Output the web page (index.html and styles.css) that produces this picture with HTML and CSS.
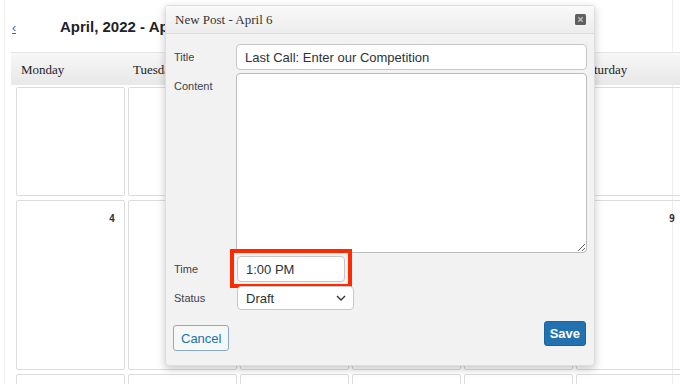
FILE: index.html
```html
<!DOCTYPE html>
<html lang="en">
<head>
    <meta charset="UTF-8">
    <meta name="viewport" content="width=device-width, initial-scale=1.0">
    <title>Editorial Calendar</title>
    <link rel="stylesheet" href="styles.css">
</head>
<body>
    <div class="page">
        <div class="topbar">
            <a href="#" class="prev">&lsaquo;</a>
            <h2 class="range">April, 2022 - April, 2022</h2>
        </div>

        <div class="calendar">
            <div class="day-names">
                <div class="day-name">Monday</div>
                <div class="day-name">Tuesday</div>
                <div class="day-name">Wednesday</div>
                <div class="day-name">Thursday</div>
                <div class="day-name">Friday</div>
                <div class="day-name">Saturday</div>
                <div class="day-name">Sunday</div>
            </div>
            <div class="weeks">
                <div class="day"></div>
                <div class="day"></div>
                <div class="day"></div>
                <div class="day"></div>
                <div class="day"></div>
                <div class="day"></div>
                <div class="day"></div>

                <div class="day"><span class="num">4</span></div>
                <div class="day"><span class="num">5</span></div>
                <div class="day"><span class="num">6</span></div>
                <div class="day"><span class="num">7</span></div>
                <div class="day"><span class="num">8</span></div>
                <div class="day"><span class="num">9</span></div>
                <div class="day"><span class="num">10</span></div>

                <div class="day"></div>
                <div class="day"></div>
                <div class="day"></div>
                <div class="day"></div>
                <div class="day"></div>
                <div class="day"></div>
                <div class="day"></div>
            </div>
        </div>

        <div class="dialog">
            <div class="dialog-head">
                <span class="dialog-title">New Post - April 6</span>
                <span class="close">
                    <svg width="11" height="11" viewBox="0 0 11 11">
                        <rect width="11" height="11" rx="1.5" fill="#5f5f5f"/>
                        <path d="M3.3 3.3 L7.7 7.7 M7.7 3.3 L3.3 7.7" stroke="#bdbdbd" stroke-width="1.4"/>
                    </svg>
                </span>
            </div>
            <div class="dialog-body">
                <label class="label">Title</label>
                <input class="field" type="text" value="Last Call: Enter our Competition">

                <label class="label">Content</label>
                <textarea class="field content"></textarea>

                <label class="label">Time</label>
                <div class="time-wrap"><input class="field time" type="text" value="1:00 PM"></div>

                <label class="label">Status</label>
                <div class="select-wrap">
                    <select class="field status">
                        <option>Draft</option>
                        <option>Pending Review</option>
                        <option>Scheduled</option>
                    </select>
                    <svg class="chevron" width="10" height="6" viewBox="0 0 10 6">
                        <path d="M1 1 L5 5 L9 1" fill="none" stroke="#333" stroke-width="1.4"/>
                    </svg>
                </div>
            </div>
            <div class="dialog-foot">
                <button class="button cancel">Cancel</button>
                <button class="button save">Save</button>
            </div>
        </div>
    </div>
</body>
</html>
```

FILE: styles.css
```css
body {
    margin: 0;
    background-color: #fff;
    font-family: 'Liberation Sans', Arial, sans-serif;
    color: #333;
    overflow: hidden;
}
.page {
    position: relative;
    height: 384px;
    margin: 0 7px 0 4px;
    border-left: 1px solid #eeeeee;
    border-right: 1px solid #eeeeee;
}
.topbar {
    display: flex;
    align-items: center;
    height: 52px;
    padding-left: 7px;
}
.prev {
    color: #2271b1;
    font-size: 12px;
    width: 48px;
    margin-top: 4px;
}
.range {
    margin: 0;
    font-size: 15px;
    font-weight: bold;
    color: #1d2327;
    white-space: nowrap;
}
.calendar {
    margin-left: 6px;
    width: 791px;
}
.day-names {
    display: grid;
    grid-template-columns: repeat(7, 109px);
    column-gap: 3px;
    padding: 0 5px;
    height: 32px;
    align-items: center;
    background: linear-gradient(#f7f7f7, #e8e8e8);
    border-top: 1px solid #e6e6e6;
}
.day-name {
    font-family: 'Liberation Serif', 'Times New Roman', serif;
    font-size: 13px;
    color: #222;
    padding-left: 5px;
    padding-top: 1px;
}
.weeks {
    display: grid;
    grid-template-columns: repeat(7, 109px);
    grid-template-rows: 109px 170px 100px;
    gap: 4px 3px;
    padding: 2px 5px;
}
.day {
    border: 1px solid #dcdcdc;
    border-radius: 2px;
    text-align: right;
    padding: 7px 9px 0 0;
}
.num {
    font-family: 'DejaVu Sans Mono', monospace;
    font-size: 10px;
    font-weight: bold;
    color: #333;
}
.dialog {
    position: absolute;
    left: 160px;
    top: 5px;
    width: 430px;
    height: 361px;
    box-sizing: border-box;
    background-color: #f2f2f2;
    border: 1px solid #dedede;
    border-radius: 3px;
    box-shadow: 0 3px 8px rgba(0, 0, 0, 0.22);
    display: flex;
    flex-direction: column;
}
.dialog-head {
    display: flex;
    align-items: center;
    justify-content: space-between;
    height: 27px;
    padding: 0 8px 0 9px;
    background: linear-gradient(#fafafa, #ececec);
    border-bottom: 1px solid #dddddd;
}
.dialog-title {
    font-family: 'Liberation Serif', 'Times New Roman', serif;
    font-size: 13px;
    color: #333;
}
.close {
    display: flex;
}
.dialog-body {
    display: grid;
    grid-template-columns: 62px 351px;
    row-gap: 3px;
    padding: 10px 0 0 8px;
}
.label {
    font-size: 11px;
    color: #3c434a;
    padding-top: 7px;
}
.field {
    box-sizing: border-box;
    height: 26px;
    margin: 0;
    padding: 0 8px;
    border: 1px solid #c7c7c7;
    border-radius: 4px;
    background-color: #fff;
    font-family: 'Liberation Sans', Arial, sans-serif;
    font-size: 13px;
    color: #2c3338;
    outline: none;
}
.content {
    height: 180px;
    width: 351px;
    resize: vertical;
    border-color: #bdbdbd;
}
.time-wrap {
    position: relative;
    width: 108px;
    height: 26px;
    margin-left: 1px;
}
/* highlight box drawn over the time field */
.time-wrap::after {
    content: '';
    position: absolute;
    left: -7px;
    right: -7px;
    top: -7px;
    bottom: -6px;
    border: 4px solid #ff2a00;
    pointer-events: none;
}
.time {
    width: 108px;
    display: block;
}
.select-wrap {
    position: relative;
    width: 117px;
    margin-top: 1px;
    margin-left: 1px;
}
.status {
    width: 117px;
    height: 24px;
    appearance: none;
    -webkit-appearance: none;
}
.chevron {
    position: absolute;
    right: 8px;
    top: 9px;
    pointer-events: none;
}
.dialog-foot {
    display: flex;
    justify-content: space-between;
    align-items: flex-start;
    padding: 11px 8px 0 7px;
}
.button {
    font-family: 'Liberation Sans', Arial, sans-serif;
    font-size: 13px;
    border-radius: 3px;
    cursor: pointer;
}
.cancel {
    margin-top: 4px;
    height: 26px;
    padding: 0 7px;
    color: #2271b1;
    background-color: #f6f7f7;
    border: 1px solid #8ba9c9;
}
.save {
    height: 25px;
    padding: 0 5px;
    color: #fff;
    font-weight: bold;
    background-color: #2271b1;
    border: 1px solid #1b64a0;
}
```
